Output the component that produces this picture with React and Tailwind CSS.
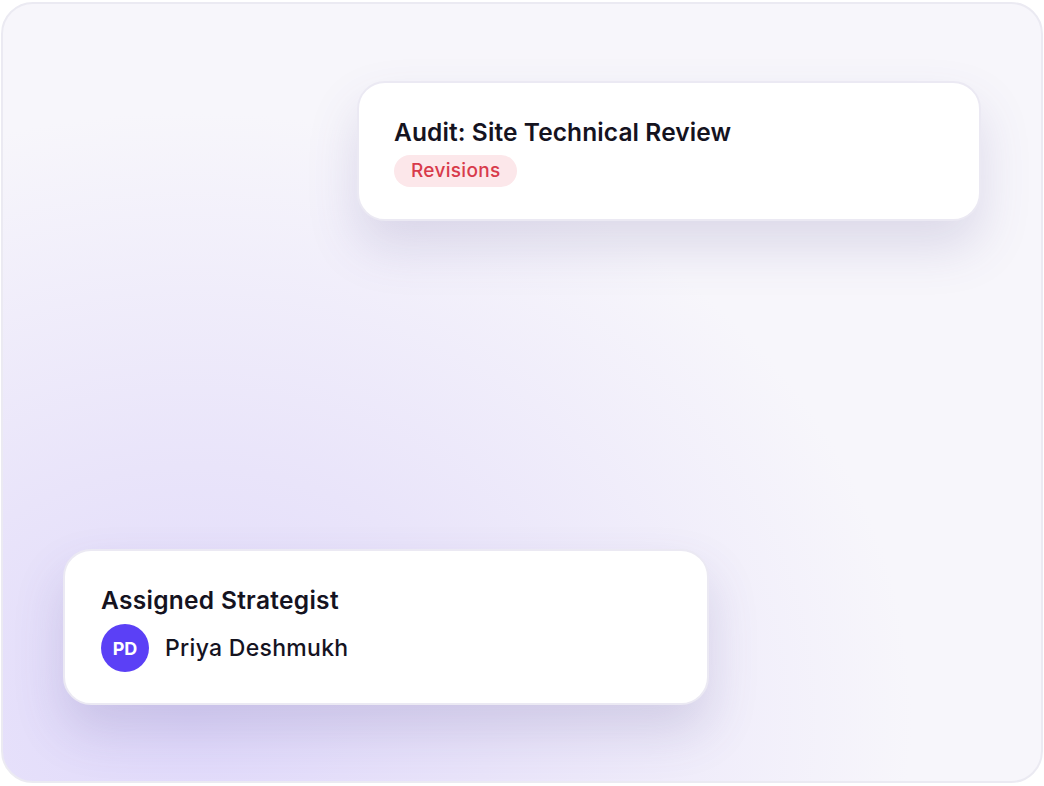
export default function App() {
  return (
    <div className="w-[1044px] h-[786px] bg-white px-[1px] pt-[2px]" style={{ fontFamily: "Inter, 'Noto Sans', sans-serif" }}>
      <div className="h-[781px] rounded-[32px] border-2 border-[#ebeaf2] bg-[#f7f6fb] bg-[radial-gradient(ellipse_at_18%_92%,#e0d9fb_0%,#e9e4fa_25%,#f7f6fb_60%)] flex flex-col justify-between pt-[77px] pb-[76px] px-[60px]">
        {/* Task card */}
        <div className="self-end w-[624px] rounded-[28px] border-2 border-[#ebe9f3] bg-white pl-[35px] pt-[33px] pb-[32px] shadow-[0_26px_50px_rgba(90,80,150,0.17)]">
          <h2 className="text-[24.5px] leading-[32px] font-semibold tracking-[0.1px] text-[#15131f]">
            Audit: Site Technical Review
          </h2>
          <span className="mt-[7px] inline-flex h-[32px] items-center rounded-full bg-[#fce7ea] px-[17px] text-[19px] font-medium tracking-[0.3px] text-[#d83a4b]">
            Revisions
          </span>
        </div>

        {/* Strategist card */}
        <div className="w-[646px] rounded-[28px] border-2 border-[#ebe9f3] bg-white pl-[36px] pt-[33px] pb-[31px] shadow-[0_26px_50px_rgba(90,80,150,0.19)]">
          <h3 className="text-[24.5px] leading-[32px] font-semibold tracking-[0.3px] text-[#15131f]">
            Assigned Strategist
          </h3>
          <div className="mt-[8px] flex items-center gap-[16px]">
            <div className="w-[48px] h-[48px] rounded-full bg-[#5b40f6] flex items-center justify-center text-white text-[18px] font-bold">
              PD
            </div>
            <span className="text-[23px] font-medium tracking-[0.3px] text-[#15131f]">Priya Deshmukh</span>
          </div>
        </div>
      </div>
    </div>
  );
}
